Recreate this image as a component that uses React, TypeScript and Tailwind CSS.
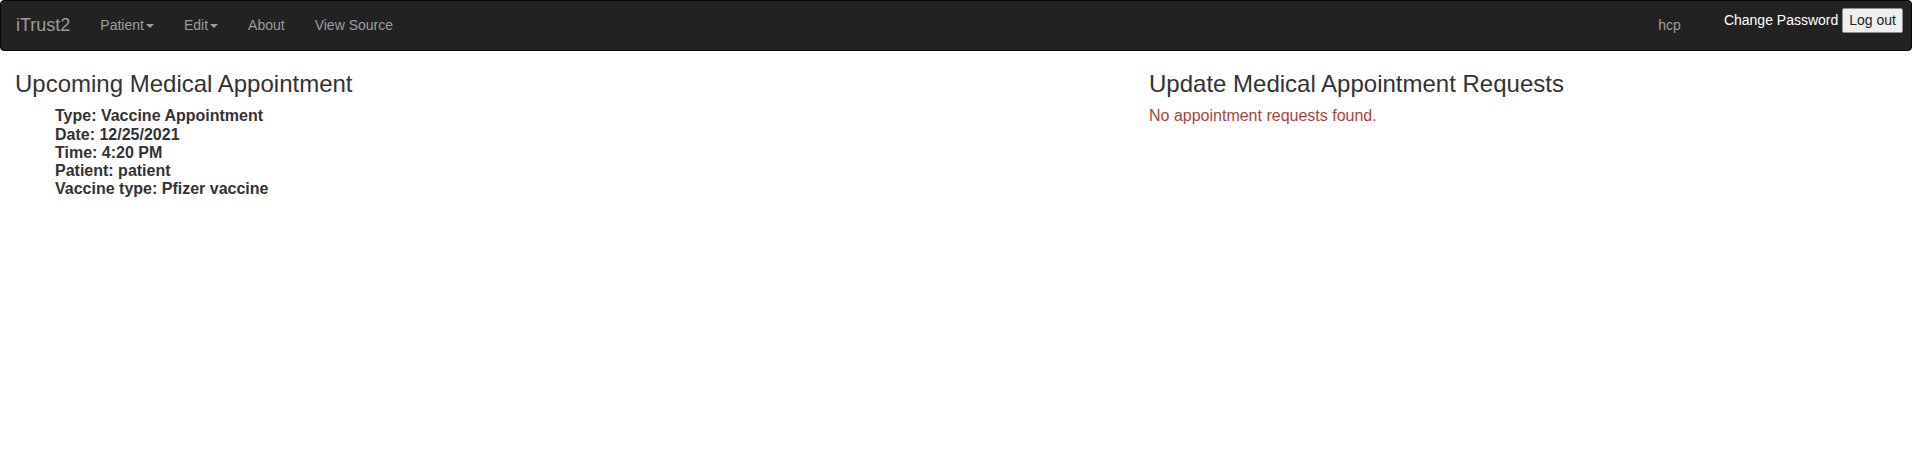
import React from 'react';

const font = { fontFamily: '"Liberation Sans", Arial, Helvetica, sans-serif' };

function Caret() {
    return (
        <span className="inline-block w-0 h-0 ml-[2px] align-middle border-t-4 border-x-4 border-x-transparent border-t-[#9d9d9d]" />
    );
}

function NavBar() {
    const links = [
        { label: 'Patient', caret: true },
        { label: 'Edit', caret: true },
        { label: 'About', caret: false },
        { label: 'View Source', caret: false },
    ];

    return (
        <nav className="h-[51px] bg-[#222222] border border-[#080808] rounded-[4px] flex justify-between text-[14px] leading-[20px]">
            {/* Left: brand + menu */}
            <div className="flex">
                <a className="block px-[15px] py-[14px] text-[18px] leading-[20px] text-[#9d9d9d]">iTrust2</a>
                <ul className="flex">
                    {links.map(link => (
                        <li key={link.label}>
                            <a className="block px-[15px] pt-[14px] pb-[15px] text-[#9d9d9d] whitespace-nowrap">
                                {link.label}
                                {link.caret && <Caret />}
                            </a>
                        </li>
                    ))}
                </ul>
            </div>

            {/* Right: user + actions */}
            <div className="flex items-start pr-[8px]">
                <span className="pt-[14px] text-[#9d9d9d]">hcp</span>
                <div className="ml-[43px] mt-[7px] flex items-baseline">
                    <a className="text-white whitespace-nowrap">Change Password</a>
                    <button className="ml-[4px] px-[6px] py-[1px] leading-[21px] text-[14px] text-[#222] bg-[#efefef] border border-[#8f8f8f] rounded-[2px]">
                        Log out
                    </button>
                </div>
            </div>
        </nav>
    );
}

export default function App() {
    const details = [
        'Type: Vaccine Appointment',
        'Date: 12/25/2021',
        'Time: 4:20 PM',
        'Patient: patient',
        'Vaccine type: Pfizer vaccine',
    ];

    return (
        <div className="min-h-[455px] bg-white text-[#333333]" style={font}>
            <NavBar />

            <div className="grid grid-cols-[1134px_1fr] mt-[20px]">
                {/* Upcoming appointment */}
                <div className="px-[15px]">
                    <h3 className="text-[24px] leading-[26.4px] font-normal mb-[10px]">Upcoming Medical Appointment</h3>
                    <div className="pl-[40px] text-[16px] leading-[18.2px] font-bold">
                        {details.map(line => (
                            <div key={line}>{line}</div>
                        ))}
                    </div>
                </div>

                {/* Requests */}
                <div className="px-[15px]">
                    <h3 className="text-[24px] leading-[26.4px] font-normal mb-[10px]">Update Medical Appointment Requests</h3>
                    <p className="text-[16px] leading-[18.2px] text-[#a94442]">No appointment requests found.</p>
                </div>
            </div>
        </div>
    );
}
